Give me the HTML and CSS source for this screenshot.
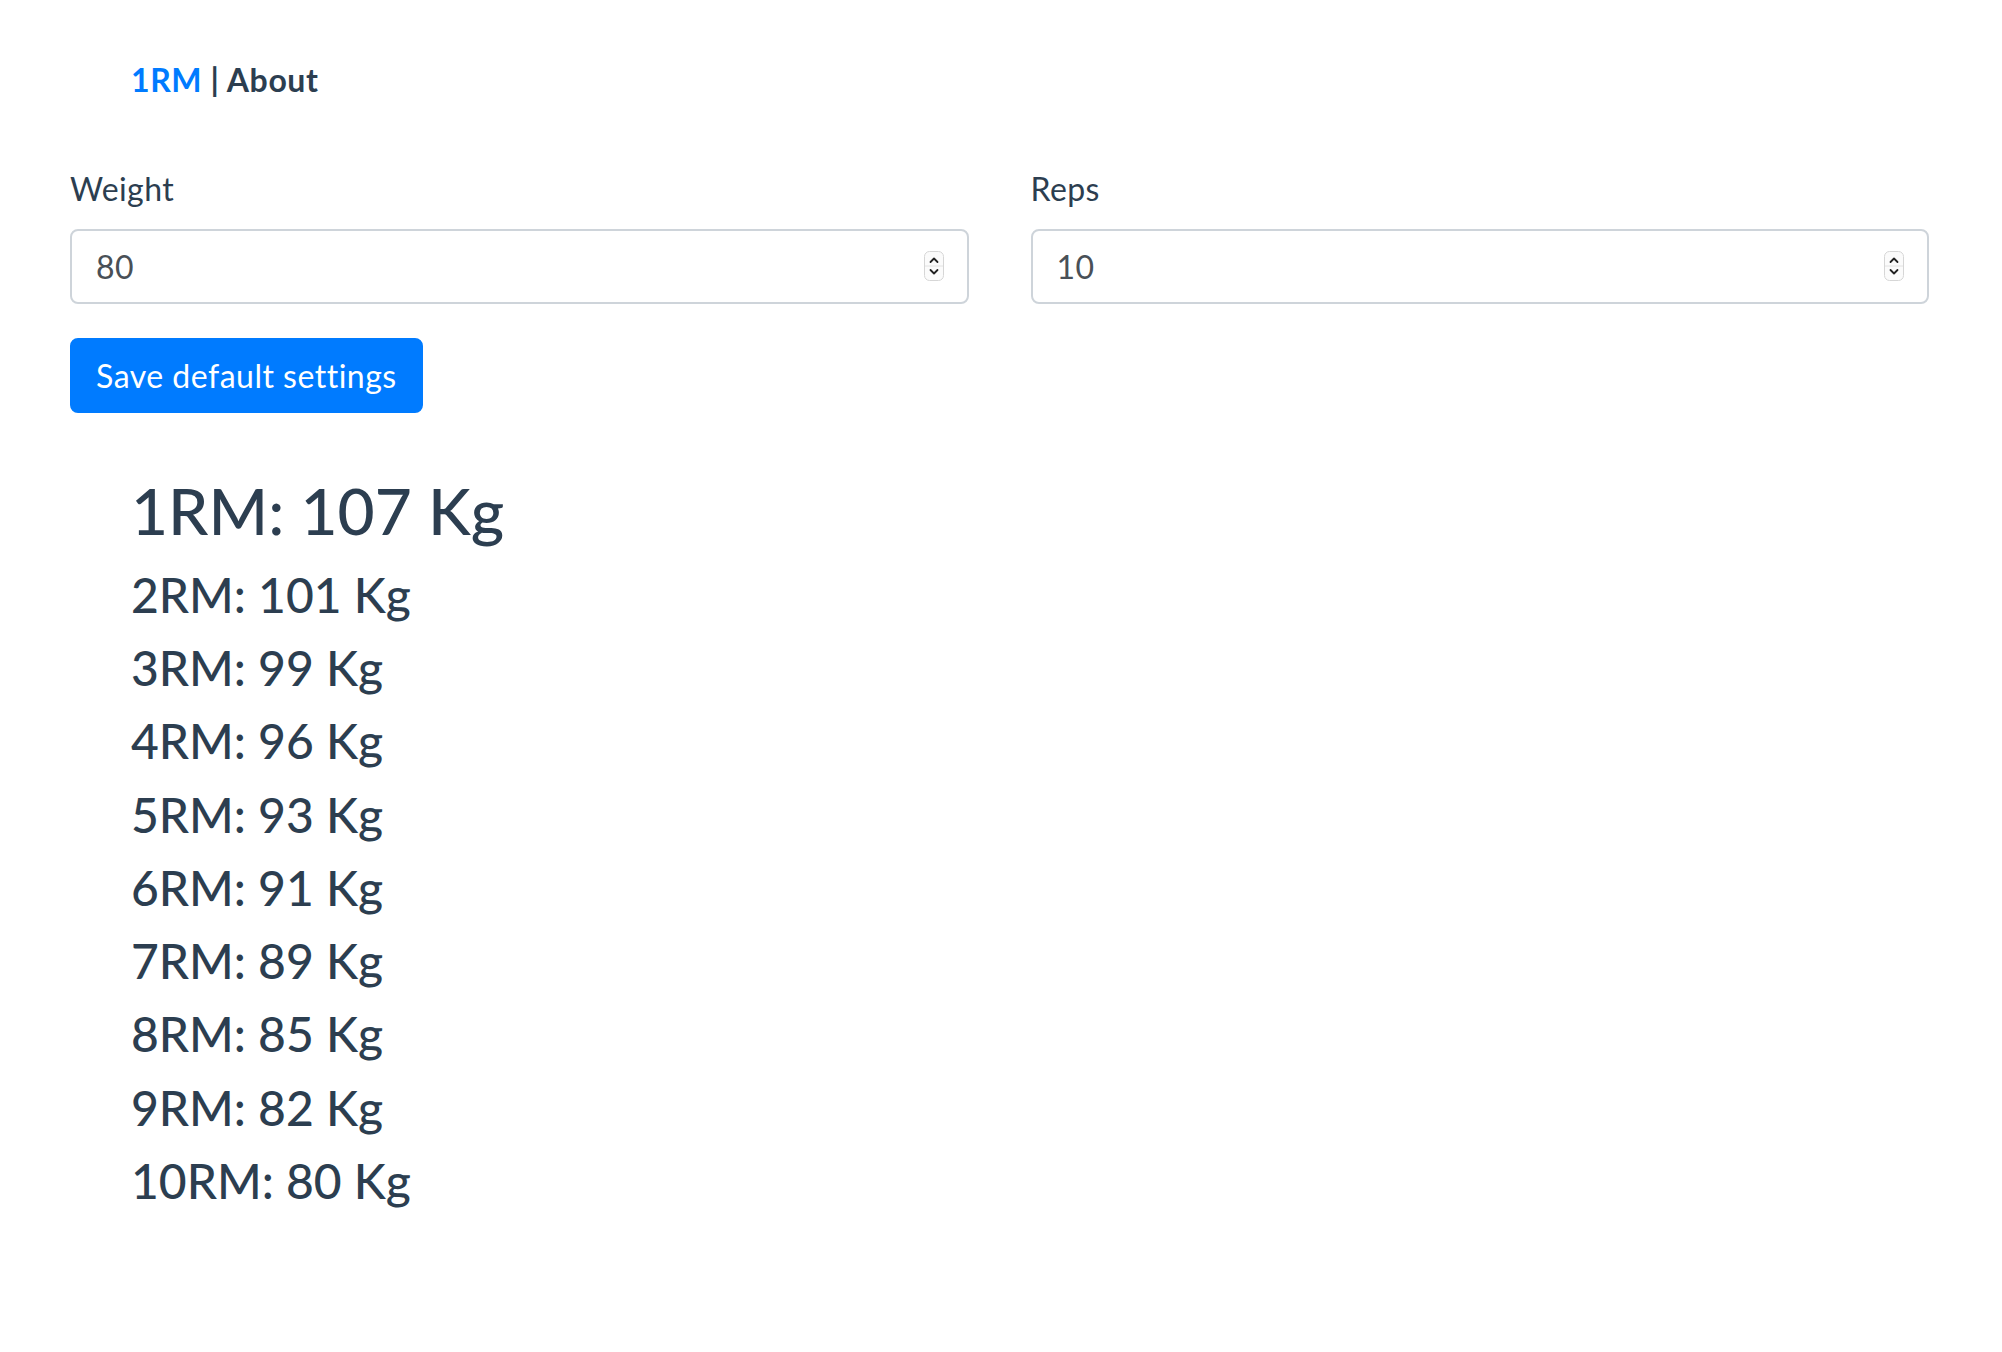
FILE: index.html
```html
<!DOCTYPE html>
<html lang="en">
<head>
<meta charset="utf-8">
<title>1RM</title>
<link rel="stylesheet" href="styles.css">
</head>
<body>
<div class="app">
  <nav class="nav">
    <a class="nav-link active" href="#">1RM</a> | <a class="nav-link" href="#">About</a>
  </nav>
  <div class="form-row">
    <div class="field">
      <label class="label" for="weight">Weight</label>
      <div class="input-wrap">
        <input class="input" id="weight" type="text" value="80">
        <span class="spinner">
          <svg width="20" height="30" viewBox="0 0 20 30">
            <rect x="0.5" y="0.5" width="19" height="29" rx="5" fill="#fbfbfb" stroke="#d6d6d6"/>
            <line x1="1" y1="15" x2="19" y2="15" stroke="#e2e2e2"/>
            <polyline points="6.5,11 10,7.5 13.5,11" fill="none" stroke="#222" stroke-width="1.8" stroke-linecap="round" stroke-linejoin="round"/>
            <polyline points="6.5,19 10,22.5 13.5,19" fill="none" stroke="#222" stroke-width="1.8" stroke-linecap="round" stroke-linejoin="round"/>
          </svg>
        </span>
      </div>
    </div>
    <div class="field">
      <label class="label" for="reps">Reps</label>
      <div class="input-wrap">
        <input class="input" id="reps" type="text" value="10">
        <span class="spinner">
          <svg width="20" height="30" viewBox="0 0 20 30">
            <rect x="0.5" y="0.5" width="19" height="29" rx="5" fill="#fbfbfb" stroke="#d6d6d6"/>
            <line x1="1" y1="15" x2="19" y2="15" stroke="#e2e2e2"/>
            <polyline points="6.5,11 10,7.5 13.5,11" fill="none" stroke="#222" stroke-width="1.8" stroke-linecap="round" stroke-linejoin="round"/>
            <polyline points="6.5,19 10,22.5 13.5,19" fill="none" stroke="#222" stroke-width="1.8" stroke-linecap="round" stroke-linejoin="round"/>
          </svg>
        </span>
      </div>
    </div>
  </div>
  <button class="btn" type="button">Save default settings</button>
  <div class="results">
    <h2 class="rm-main">1RM: 107 Kg</h2>
    <h4 class="rm">2RM: 101 Kg</h4>
    <h4 class="rm">3RM: 99 Kg</h4>
    <h4 class="rm">4RM: 96 Kg</h4>
    <h4 class="rm">5RM: 93 Kg</h4>
    <h4 class="rm">6RM: 91 Kg</h4>
    <h4 class="rm">7RM: 89 Kg</h4>
    <h4 class="rm">8RM: 85 Kg</h4>
    <h4 class="rm">9RM: 82 Kg</h4>
    <h4 class="rm">10RM: 80 Kg</h4>
  </div>
</div>
</body>
</html>
```

FILE: styles.css
```css
* { box-sizing: border-box; }
html, body { margin: 0; padding: 0; background: #fff; }
body {
  font-family: "Lato", "Noto Sans", sans-serif;
  font-size: 32px;
  line-height: 1.5;
  color: #2c3e50;
  letter-spacing: 0.4px;
}
.app {
  padding: 0 73px 0 70px;
}
.nav {
  padding: 56px 0 0 61px;
  font-weight: bold;
  height: 165px;
  letter-spacing: 0.6px;
}
.nav-link {
  color: #2c3e50;
  text-decoration: none;
  font-weight: bold;
}
.nav-link.active { color: #007bff; }
.form-row {
  display: grid;
  grid-template-columns: 1fr 1fr;
  column-gap: 62px;
}
.field { margin-bottom: 32px; }
.label {
  display: block;
  margin-bottom: 16px;
}
.input-wrap { position: relative; }
.input {
  display: block;
  width: 100%;
  height: 75px;
  padding: 12px 24px;
  font-family: inherit;
  font-size: 32px;
  letter-spacing: 0.4px;
  color: #495057;
  border: 2px solid #ced4da;
  border-radius: 8px;
  background: #fff;
  outline: none;
}
.spinner {
  position: absolute;
  right: 25px;
  top: 22px;
  width: 20px;
  height: 30px;
  display: block;
}
.spinner svg { display: block; }
.btn {
  display: inline-block;
  height: 75px;
  padding: 0 24px;
  font-family: inherit;
  font-size: 32px;
  letter-spacing: 0.5px;
  color: #fff;
  background: #007bff;
  border: 2px solid #007bff;
  border-radius: 8px;
  margin: 2px 0 0 0;
}
.results {
  padding: 60px 0 0 61px;
  letter-spacing: 0;
}
.rm-main {
  margin: 0 0 16px;
  font-size: 64px;
  font-weight: 500;
  line-height: 1.2;
}
.rm {
  margin: 0 0 15.7px;
  font-size: 48px;
  font-weight: 500;
  line-height: 1.2;
}
```
